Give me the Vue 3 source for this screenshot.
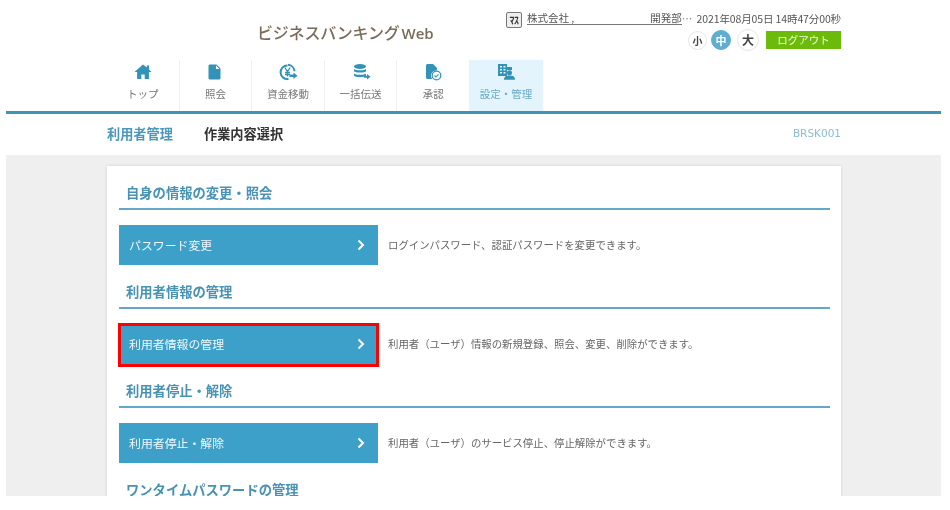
<script setup>
const navItems = [
  { label: 'トップ', icon: 'home' },
  { label: '照会', icon: 'doc' },
  { label: '資金移動', icon: 'yen' },
  { label: '一括伝送', icon: 'db' },
  { label: '承認', icon: 'approve' },
  { label: '設定・管理', icon: 'admin', active: true },
]
const sections = [
  { title: '自身の情報の変更・照会', button: 'パスワード変更', desc: 'ログインパスワード、認証パスワードを変更できます。' },
  { title: '利用者情報の管理', button: '利用者情報の管理', desc: '利用者（ユーザ）情報の新規登録、照会、変更、削除ができます。', marked: true },
  { title: '利用者停止・解除', button: '利用者停止・解除', desc: '利用者（ユーザ）のサービス停止、停止解除ができます。' },
  { title: 'ワンタイムパスワードの管理' },
]
</script>

<template>
  <div class="page">
    <header class="header">
      <div class="top">
        <h1 class="brand">ビジネスバンキング<span class="web">Web</span></h1>
        <div class="account">
          <div class="user-row">
            <span class="badge">ﾏｽ</span>
            <span class="company">株式会社 ,<span class="gap"></span>開発部</span><span class="more">…</span>
            <span class="date">2021年08月05日 14時47分00秒</span>
          </div>
          <div class="tools">
            <span class="size small">小</span>
            <span class="size on">中</span>
            <span class="size big">大</span>
            <span class="logout">ログアウト</span>
          </div>
        </div>
      </div>
      <nav class="nav">
        <div v-for="item in navItems" :key="item.label" class="tab" :class="{ active: item.active }">
          <svg class="icon" viewBox="0 0 20 18" width="20" height="18">
            <path v-if="item.icon === 'home'" d="M10 1.500 1.500 9h2.600v7h4.200v-4.600h3.400V16h4.200V9h2.600L16 6.400V2.500h-2.200v1.900z" />
            <path v-else-if="item.icon === 'doc'" d="M5 1.500h6.500L15.500 5.500V15a1.500 1.500 0 0 1-1.500 1.500H5A1.500 1.500 0 0 1 3.500 15V3A1.500 1.500 0 0 1 5 1.500zM11 2.500V6h3.500z" fill-rule="evenodd" />
            <g v-else-if="item.icon === 'yen'">
              <path d="M9.500 2.500a6.800 6.800 0 1 0 1 13.500" fill="none" stroke="#3292b8" stroke-width="2" />
              <path d="M10 1.800a7 7 0 0 1 6.500 6.500" fill="none" stroke="#3292b8" stroke-width="2" />
              <path d="M6.800 4.500 9.500 8.500 12.200 4.500M9.500 8.500v5M7 9.500h5M7 11.500h5" fill="none" stroke="#3292b8" stroke-width="1.300" />
              <path d="M11.500 11.500h4V9.500l4 3.200-4 3.200v-2h-4z" />
            </g>
            <g v-else-if="item.icon === 'db'">
              <ellipse cx="9" cy="3.500" rx="6" ry="2.500" />
              <path d="M3 6c1 1.700 11 1.700 12 0v2.300c-1 1.700-11 1.700-12 0zM3 10.400c1 1.700 11 1.700 12 0v2.300c-1 1.900-11 1.900-12 0z" />
              <path d="M13 12.800h3V11l3.500 2.800-3.500 2.800v-1.900h-3z" />
            </g>
            <g v-else-if="item.icon === 'approve'">
              <path d="M4.500 1h5.500l4 4v2.200a5.500 5.500 0 0 0-4.800 8.800H4.500A1.500 1.500 0 0 1 3 14.500v-12A1.500 1.500 0 0 1 4.500 1z" />
              <circle cx="13.500" cy="12.500" r="4.300" fill="#fff" stroke="#3292b8" stroke-width="1.200" />
              <path d="m11.500 12.500 1.500 1.500 2.500-2.700" fill="none" stroke="#3292b8" stroke-width="1.100" />
            </g>
            <g v-else>
              <path d="M2 1h9v12H2zM11 4h5v3h-5z" />
              <path d="M4 3h2v1.500H4zM7.500 3h2v1.500h-2zM4 6h2v1.500H4zM7.500 6h2v1.500h-2zM4 9h2v1.500H4zM7.500 9h2v1.500h-2z" fill="#e3f4fc" />
              <circle cx="13.500" cy="9.800" r="2.500" />
              <path d="M8 16.800c0-3.500 2.300-4.300 5.500-4.300s5.500.8 5.500 4.300z" />
            </g>
          </svg>
          <span class="tab-label">{{ item.label }}</span>
        </div>
      </nav>
    </header>
    <div class="titlebar">
      <div class="titlebar-inner">
        <span class="crumb">利用者管理</span>
        <span class="crumb-sub">作業内容選択</span>
        <span class="code">BRSK001</span>
      </div>
    </div>
    <main class="main">
      <section class="card">
        <div v-for="s in sections" :key="s.title" class="section">
          <h2 class="heading">{{ s.title }}</h2>
          <div v-if="s.button" class="row">
            <div class="action" :class="{ marked: s.marked }">
              <span>{{ s.button }}</span>
              <svg class="chev" width="8" height="12" viewBox="0 0 8 12"><path d="m1.500 1.500 4.500 4.500-4.500 4.500" fill="none" stroke="#fff" stroke-width="2" /></svg>
            </div>
            <p class="desc">{{ s.desc }}</p>
          </div>
        </div>
      </section>
    </main>
  </div>
</template>

<style>
html, body { margin: 0; background: #fff; }
</style>

<style scoped>
.page {
  width: 935px;
  height: 496px;
  margin-left: 6px;
  overflow: hidden;
  font-family: "Noto Sans CJK JP", "Noto Sans", sans-serif;
  background: #efefef;
  filter: blur(0.35px);
}
.header { height: 111px; background: #fff; border-bottom: 3px solid #3d94b5; }
.top { height: 60px; display: flex; justify-content: space-between; padding: 0 100px 0 101px; }
.brand { margin: 21px 0 0 150px; font-size: 16px; line-height: 22px; font-weight: 500; color: #7a6b5a; white-space: nowrap; letter-spacing: -0.2px; }
.web { margin-left: 2px; font-family: "Open Sans", sans-serif; font-weight: 600; font-size: 15px; letter-spacing: 0; }
.account { width: 335px; }
.user-row { display: flex; align-items: center; height: 16px; margin-top: 10px; font-size: 10.500px; color: #555; white-space: nowrap; }
.badge { box-sizing: border-box; width: 16px; height: 16px; margin-top: 3px; border: 1.500px solid #777; border-radius: 2px; font-size: 10px; line-height: 13px; text-align: center; color: #333; font-weight: 700; background: #eee; letter-spacing: -0.5px; }
.company { margin-left: 5px; line-height: 13px; border-bottom: 1px solid #777; }
.gap { display: inline-block; width: 76px; }
.more { color: #777; }
.date { margin-left: auto; letter-spacing: -0.12px; }
.tools { display: flex; justify-content: flex-end; align-items: center; margin-top: 3px; }
.size { box-sizing: border-box; width: 20px; height: 20px; border-radius: 50%; border: 1px solid #e6e6e6; font-size: 10px; line-height: 18px; text-align: center; font-weight: 700; color: #444; margin-right: 6px; }
.size.small { width: 19px; height: 19px; line-height: 17px; margin-right: 4px; }
.size.on { background: #5fadd0; border-color: #5fadd0; color: #fff; font-size: 11px; }
.size.big { width: 22px; height: 22px; line-height: 20px; font-size: 12px; margin-right: 7px; }
.logout { box-sizing: border-box; width: 75px; height: 18px; background: #6cbb0b; color: #f0f8e0; font-size: 10.500px; line-height: 18px; text-align: center; }
.nav { display: flex; height: 51px; padding-left: 101px; }
.tab { box-sizing: border-box; width: 72.600px; height: 51px; padding-top: 3px; display: flex; flex-direction: column; align-items: center; border-right: 1px solid #eef0f0; }
.tab.active { background: #e3f4fc; border-right: 0; width: 74px; }
.tab:nth-child(5) { border-right: 0; width: 71.600px; }
.icon { fill: #3292b8; display: block; }
.tab-label { margin-top: 5px; font-size: 10.500px; line-height: 16px; color: #777; white-space: nowrap; }
.active .tab-label { color: #6aa9c5; }
.titlebar { height: 41px; background: #fff; }
.titlebar-inner { display: flex; align-items: center; height: 38px; padding: 0 100px 0 101px; }
.crumb { font-size: 13.200px; font-weight: 700; color: #4b98ba; width: 97px; }
.crumb-sub { font-size: 13.200px; font-weight: 700; color: #333; }
.code { margin-left: auto; font-size: 10.500px; font-family: "DejaVu Sans", sans-serif; color: #8dbcd3; }
.main { padding: 11px 100px 0 101px; }
.card { background: #fff; height: 340px; padding: 12px 11px 0 12px; box-shadow: 0 0 3px rgba(0,0,0,.13); }
.section { height: 99px; }
.heading { margin: 0; box-sizing: border-box; height: 32px; padding-left: 7px; font-size: 13.300px; line-height: 30px; font-weight: 700; color: #4893b3; border-bottom: 2px solid #63a8c6; white-space: nowrap; }
.row { display: flex; align-items: flex-start; margin-top: 15px; }
.action { box-sizing: border-box; width: 259px; height: 40px; padding: 0 13px 2px 10px; display: flex; justify-content: space-between; align-items: center; background: #3da0c8; color: #f2f8fb; font-size: 11.900px; }
.chev { margin-top: 2px; }
.action.marked { height: 42px; padding-bottom: 4px; outline: 3px solid #f00; outline-offset: -2px; }
.desc { margin: 0 0 0 10px; font-size: 10.400px; line-height: 39px; color: #666; white-space: nowrap; }
</style>
